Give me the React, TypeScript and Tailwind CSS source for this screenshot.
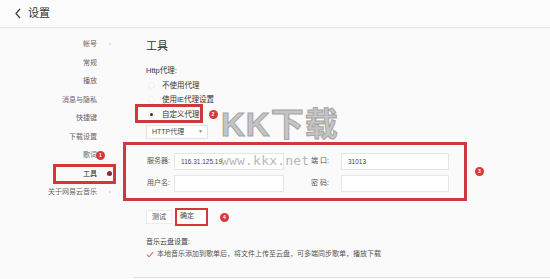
const font = { fontFamily: '"Liberation Sans", "Noto Sans CJK SC", sans-serif' };

function Badge({ n }: { n: string }) {
  return (
    <span className="flex h-[9px] w-[9px] items-center justify-center rounded-full bg-[#d9383a] text-[5px] font-bold leading-none text-white">
      {n}
    </span>
  );
}

function Sidebar() {
  const items = ['帐号', '常规', '播放', '消息与隐私', '快捷键', '下载设置', '歌词', '工具', '关于网易云音乐'];
  return (
    <aside className="w-[123px] shrink-0 pt-[7px]">
      {items.map((label) => (
        <div key={label} className="relative flex h-[18.5px] items-center">
          <span className={`w-[97px] text-right text-[7px] ${label === '工具' ? 'text-[#222]' : 'text-[#666]'}`}>{label}</span>
          <span className="ml-[10px] flex w-[5px] justify-center">
            {label === '帐号' || label === '关于网易云音乐' ? (
              <span className="h-[2px] w-[2px] rounded-full bg-[#d8d8d8]" />
            ) : null}
            {label === '工具' ? <span className="h-[5px] w-[5px] rounded-full bg-[#8a2b3b]" /> : null}
          </span>
          {label === '歌词' ? (
            <span className="absolute left-[96px] top-[5px]">
              <Badge n="1" />
            </span>
          ) : null}
          {label === '工具' ? (
            <span className="absolute left-[53px] top-[-1px] h-[20px] w-[63px] border-[3px] border-[#d0393b]" />
          ) : null}
        </div>
      ))}
    </aside>
  );
}

function Radio({ label, checked }: { label: string; checked?: boolean }) {
  return (
    <div className="flex h-[14.5px] items-center">
      <span className="ml-[2px] flex h-[7px] w-[7px] items-center justify-center rounded-full border border-[#f0f0f0]">
        {checked ? <span className="h-[3px] w-[3px] rounded-full bg-[#333]" /> : null}
      </span>
      <span className="ml-[7px] text-[7.5px] text-[#333]">{label}</span>
    </div>
  );
}

function Field({ label, value, labelW, inputW }: { label: string; value?: string; labelW: string; inputW: string }) {
  return (
    <div className="flex items-center">
      <span className={`${labelW} text-[7px] text-[#555]`}>{label}</span>
      <div className={`${inputW} flex h-[17px] items-center border border-[#e6e6e6] bg-white pl-[6px] text-[6.5px] text-[#444]`}>
        {value}
      </div>
    </div>
  );
}

export default function App() {
  return (
    <div className="relative h-[279px] w-[550px] overflow-hidden bg-[#fafafa]" style={font}>
      <header className="flex h-[28px] items-center border-b border-[#e6e6e6] bg-[#fcfcfc] pl-[14px]">
        <svg width="8" height="11" viewBox="0 0 8 11" fill="none">
          <path d="M6 1 L2 5.5 L6 10" stroke="#444" strokeWidth="1.3" />
        </svg>
        <span className="ml-[6px] text-[11px] text-[#333]">设置</span>
      </header>

      <div className="flex">
        <Sidebar />

        <main className="flex-1 pl-[23px] pt-[10px]">
          <h1 className="h-[16px] text-[11px] leading-[16px] text-[#333]">工具</h1>

          <p className="mt-[10px] h-[14px] text-[7.5px] leading-[14px] text-[#333]">Http代理:</p>
          <Radio label="不使用代理" />
          <Radio label="使用IE代理设置" />
          <div className="flex items-center">
            <div className="relative">
              <Radio label="自定义代理" checked />
              <span className="absolute left-[-11px] top-[-3px] h-[19px] w-[68px] border-[3px] border-[#d0393b]" />
            </div>
            <span className="ml-[9px]">
              <Badge n="2" />
            </span>
          </div>

          <div className="mt-[3.5px] flex h-[14px] w-[62px] items-center justify-between border border-[#e3e3e3] bg-white pl-[5px] pr-[4px] text-[7px] text-[#444]">
            <span>HTTP代理</span>
            <span className="text-[5px] text-[#888]">▼</span>
          </div>

          <div className="ml-[-23px] mt-[3px] flex items-center">
            <div className="h-[59px] w-[344px] border-[3px] border-[#d0393b] pl-[21px] pt-[8px]">
              <div className="flex">
                <Field label="服务器:" value="116.31.125.19" labelW="w-[27px]" inputW="w-[110px]" />
                <span className="ml-[27px]" />
                <Field label="端  口:" value="31013" labelW="w-[30px]" inputW="w-[108px]" />
              </div>
              <div className="mt-[5px] flex">
                <Field label="用户名:" labelW="w-[27px]" inputW="w-[110px]" />
                <span className="ml-[27px]" />
                <Field label="密  码:" labelW="w-[30px]" inputW="w-[108px]" />
              </div>
            </div>
            <span className="ml-[8px]">
              <Badge n="3" />
            </span>
          </div>

          <div className="mt-[7px] flex items-center">
            <button className="flex h-[14px] w-[26px] items-center justify-center border border-[#ececec] bg-white text-[7px] text-[#444]">
              测试
            </button>
            <div className="ml-[3px] h-[18px] w-[33px] border-[2.5px] border-[#d0393b] bg-white">
              <span className="block pl-[3px] text-[7px] leading-[12px] text-[#444]">确定</span>
            </div>
            <span className="ml-[12px]">
              <Badge n="4" />
            </span>
          </div>

          <p className="mt-[10px] h-[12px] text-[7px] leading-[12px] text-[#444]">音乐云盘设置:</p>
          <div className="flex h-[13px] items-center text-[7px] text-[#555]">
            <svg width="8" height="7" viewBox="0 0 8 7" fill="none">
              <path d="M1 3.5 L3 5.8 L7.2 1" stroke="#d0393b" strokeWidth="1" />
            </svg>
            <span className="ml-[3px]">本地音乐添加到歌单后，将文件上传至云盘，可多端同步歌单，播放下载</span>
          </div>
          <div className="ml-[-13px] mt-[16px] border-t border-[#e2e2e2]" />
        </main>
      </div>

      <div className="pointer-events-none absolute left-[221px] top-[108px] text-[33px] font-bold leading-none tracking-[1px] text-[#b8b8b8] opacity-80 [-webkit-text-stroke:1px_#8f8f8f]">
        KK下载
      </div>
      <div
        className="pointer-events-none absolute left-[221px] top-[154px] text-[13px] leading-none tracking-[0.2px] text-[#a8a8a8] opacity-80"
        style={{ fontFamily: '"DejaVu Sans Mono", monospace' }}
      >
        www.kkx.net
      </div>
    </div>
  );
}
